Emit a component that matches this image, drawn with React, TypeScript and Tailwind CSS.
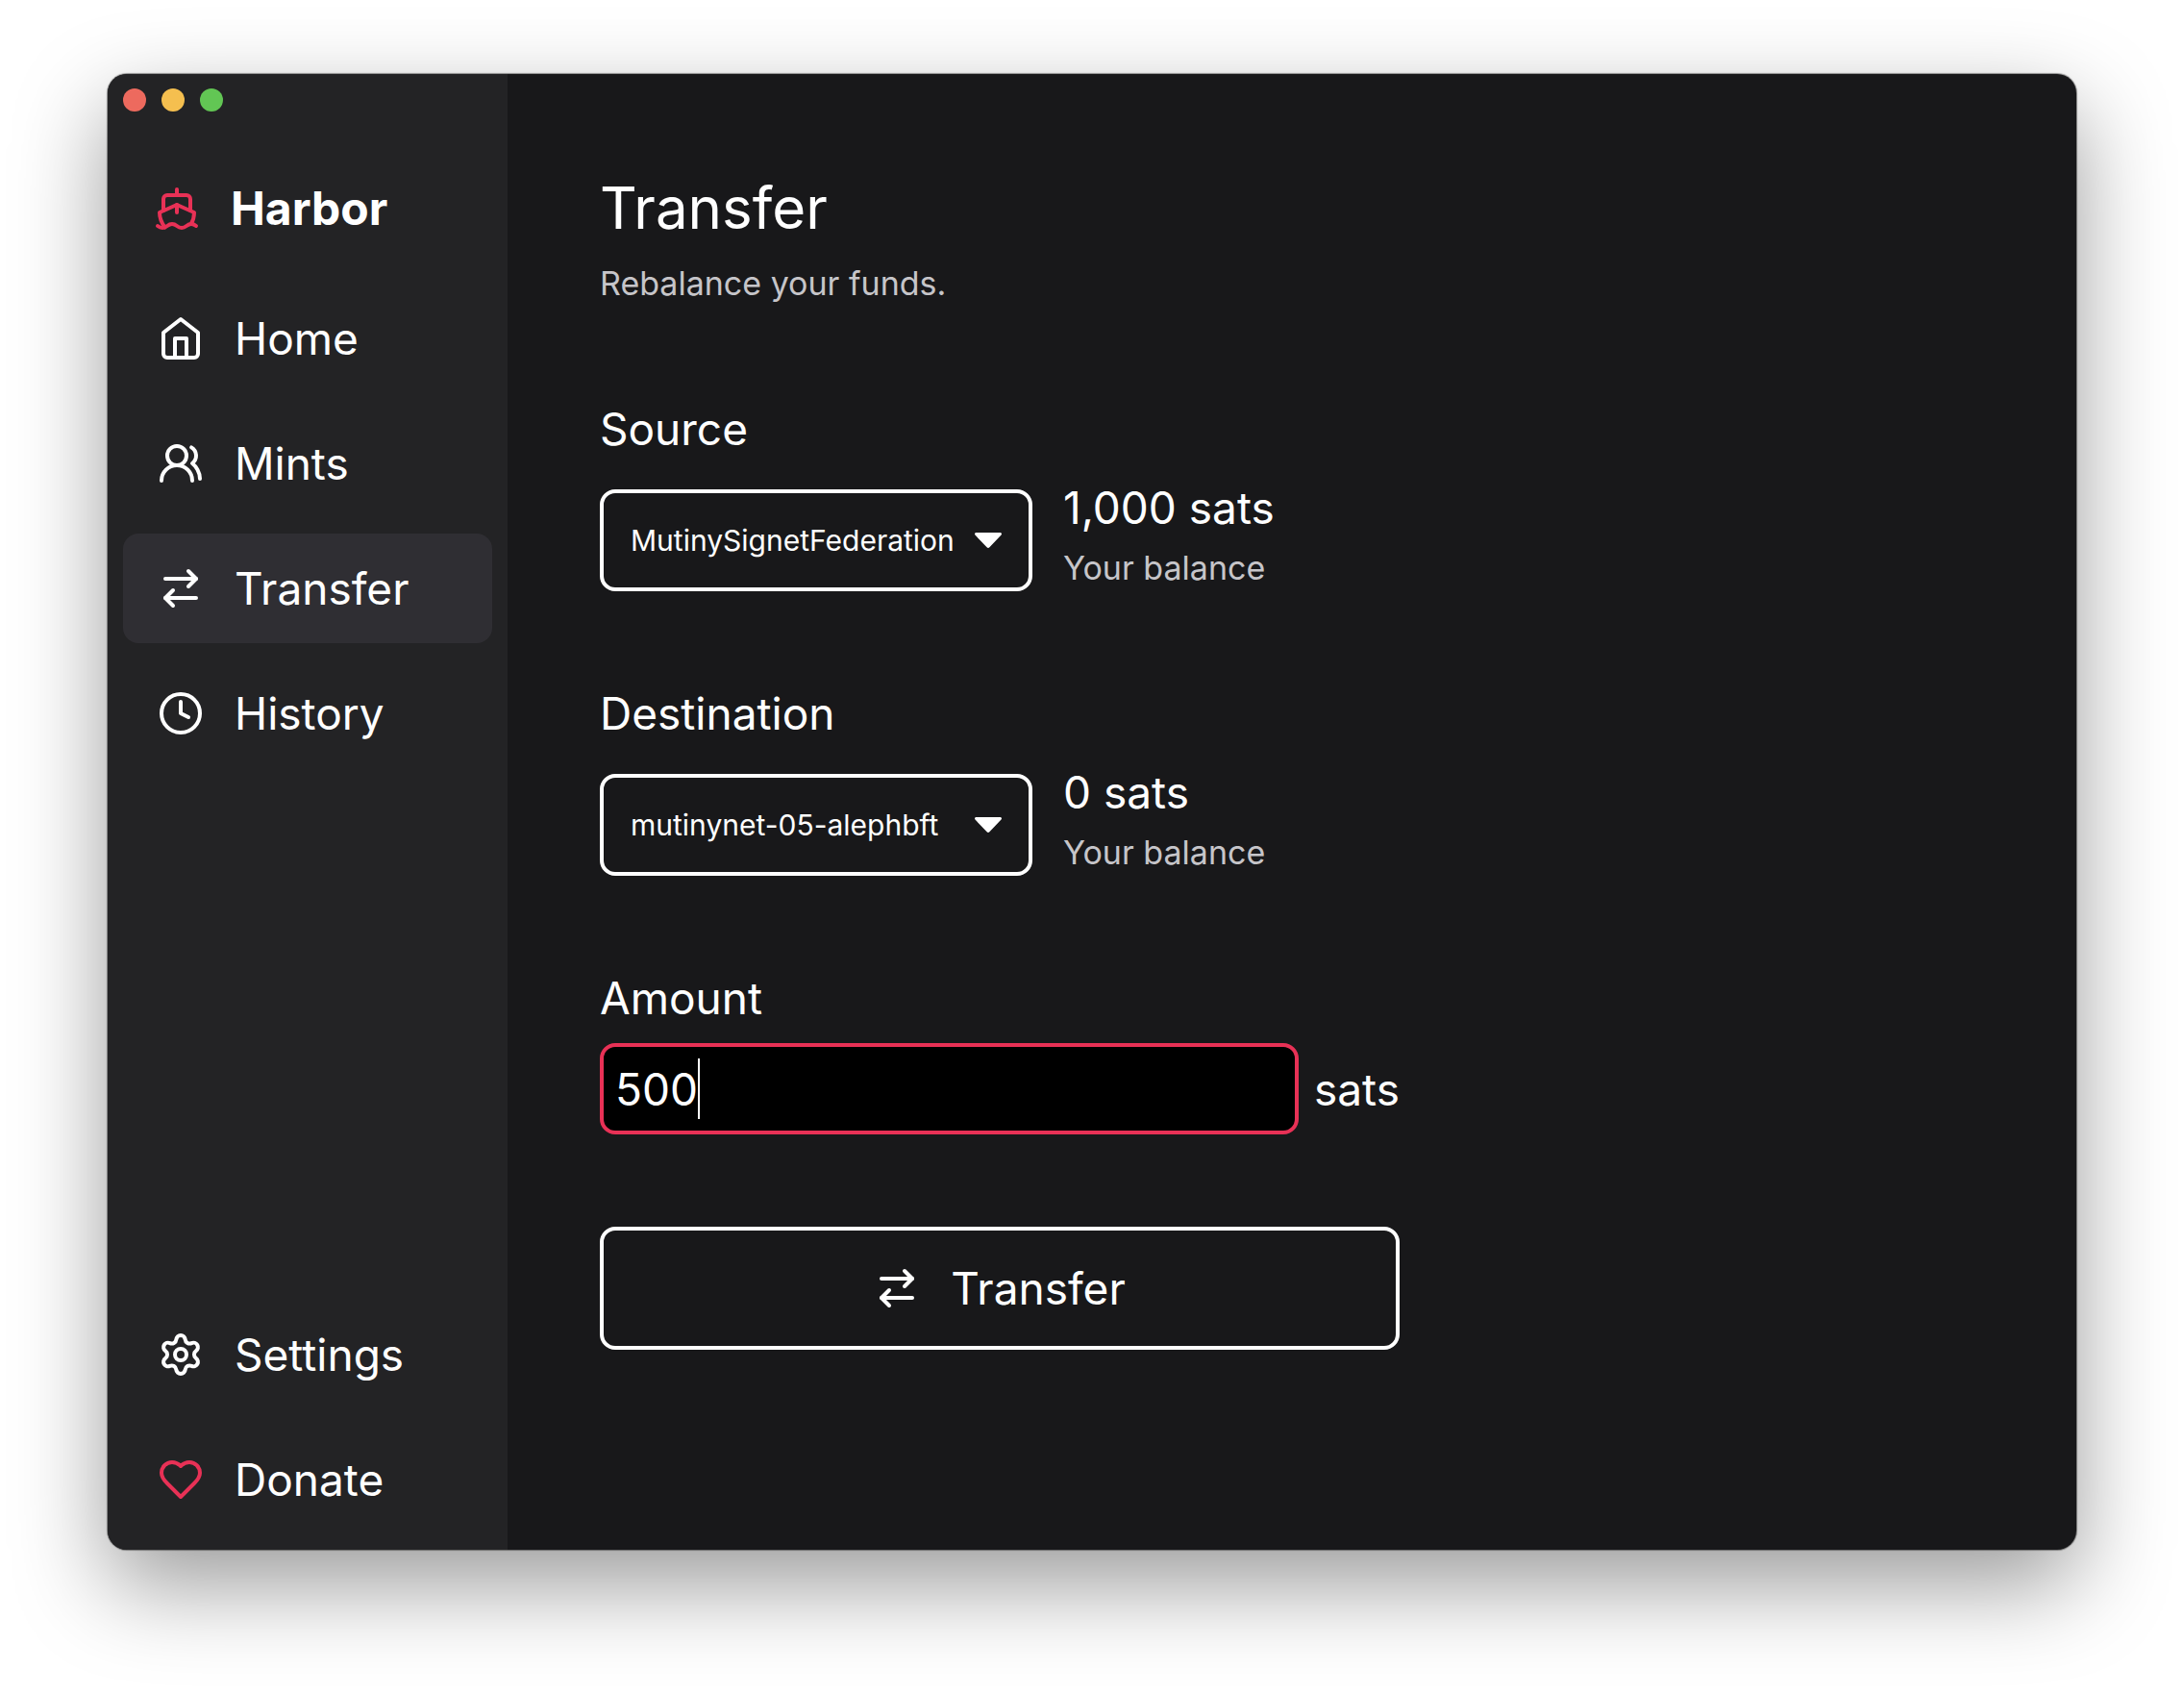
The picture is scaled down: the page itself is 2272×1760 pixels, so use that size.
import { useState } from 'react';
import type { ReactNode } from 'react';
import { ArrowRightLeft, Clock, Settings, UsersRound } from 'lucide-react';
import clsx from 'clsx';

const MINTS = [
  { name: 'MutinySignetFederation', balance: 1000 },
  { name: 'mutinynet-05-alephbft',  balance: 0 },
];

function StrokeIcon({ className, children }: { className?: string; children: ReactNode }) {
  return (
    <svg
      viewBox="0 0 24 24"
      fill="none"
      stroke="currentColor"
      strokeWidth="2"
      strokeLinecap="round"
      strokeLinejoin="round"
      aria-hidden="true"
      className={clsx('size-12 shrink-0', className)}
    >
      {children}
    </svg>
  );
}

function ShipIcon() {
  return (
    <StrokeIcon className="text-[#e83156]">
      <path d="M2 21c.6.5 1.2 1 2.5 1 2.5 0 2.5-2 5-2 1.3 0 1.9.5 2.5 1 .6.5 1.2 1 2.5 1 2.5 0 2.5-2 5-2 1.3 0 1.9.5 2.5 1" />
      <path d="M19.38 20A11.6 11.6 0 0 0 21 14l-9-4-9 4c0 2.9.94 5.34 2.81 7.76" />
      <path d="M19 13V7a2 2 0 0 0-2-2H7a2 2 0 0 0-2 2v6" />
      <path d="M12 10v4" />
      <path d="M12 2v3" />
    </StrokeIcon>
  );
}

function HomeIcon() {
  return (
    <StrokeIcon>
      <path d="m3 9 9-7 9 7v11a2 2 0 0 1-2 2H5a2 2 0 0 1-2-2z" />
      <path d="M9 22V12h6v10" />
    </StrokeIcon>
  );
}

function HeartIcon() {
  return (
    <StrokeIcon className="text-[#e83156]">
      <path d="M19 14c1.49-1.46 3-3.21 3-5.5A5.5 5.5 0 0 0 16.5 3c-1.76 0-3 .5-4.5 2-1.5-1.5-2.74-2-4.5-2A5.5 5.5 0 0 0 2 8.5c0 2.3 1.5 4.05 3 5.5l7 7Z" />
    </StrokeIcon>
  );
}

function NavItem({ icon, label, active }: { icon: ReactNode; label: string; active?: boolean }) {
  return (
    <a
      href="#"
      aria-current={active ? 'page' : undefined}
      className={clsx(
        'flex items-center gap-8 rounded-2xl px-9 py-[26px] text-[46px] leading-[62px]',
        active && 'bg-[#2f2e33]',
      )}
    >
      {icon}
      {label}
    </a>
  );
}

function MintPicker({ id, label, value, onChange }: {
  id: string;
  label: string;
  value: string;
  onChange: (name: string) => void;
}) {
  const mint = MINTS.find((m) => m.name === value);

  return (
    <div className="flex flex-col gap-5">
      <label htmlFor={id} className="text-[46px] leading-[62px]">{label}</label>
      <div className="flex items-end gap-8">
        <div className="relative w-[450px]">
          <select
            id={id}
            value={value}
            onChange={(e) => onChange(e.target.value)}
            className="block h-[106px] w-full appearance-none rounded-2xl border-4 border-white bg-transparent pr-14 pl-7 text-[30px] leading-[42px] outline-none"
          >
            {MINTS.map((m) => <option key={m.name}>{m.name}</option>)}
          </select>
          <svg
            viewBox="0 0 28 16"
            fill="currentColor"
            aria-hidden="true"
            className="pointer-events-none absolute top-[45px] right-8 h-4 w-7"
          >
            <path d="M1.6 0h24.8c1.5 0 2.1 1.6 1.1 2.6L15.4 15.3c-.8.9-2 .9-2.8 0L.5 2.6C-.5 1.6.1 0 1.6 0z" />
          </svg>
        </div>
        <div className="flex flex-col gap-2">
          <span className="text-[46px] leading-[62px]">{mint?.balance.toLocaleString('en-US')} sats</span>
          <span className="text-[34px] leading-[48px] text-[#c6c5c9]">Your balance</span>
        </div>
      </div>
    </div>
  );
}

export default function App() {
  const [source, setSource] = useState(MINTS[0].name);
  const [destination, setDestination] = useState(MINTS[1].name);
  const [amount, setAmount] = useState('500');

  return (
    <div className="flex min-h-screen bg-white px-28 pt-[77px] pb-[148px] font-[Inter,sans-serif] text-white">
      <div className="flex flex-1 overflow-hidden rounded-[20px] bg-[#18181a] shadow-[0_0_1px_1px_rgba(0,0,0,0.4),0_36px_96px_rgba(0,0,0,0.4)]">
        <aside className="flex w-[416px] shrink-0 flex-col bg-[#232325] px-4 pt-[15px] pb-4">
          <div className="flex gap-4">
            <button aria-label="Close" className="size-6 rounded-full bg-[#ed6a5e]" />
            <button aria-label="Minimize" className="size-6 rounded-full bg-[#f5bf4f]" />
            <button aria-label="Zoom" className="size-6 rounded-full bg-[#62c654]" />
          </div>

          <div className="mt-[70px] flex items-center gap-8 px-8 text-[48px] leading-[62px] font-bold">
            <ShipIcon />
            Harbor
          </div>

          <nav className="mt-[47px] flex flex-1 flex-col gap-4">
            <NavItem icon={<HomeIcon />} label="Home" />
            <NavItem icon={<UsersRound className="size-12" />} label="Mints" />
            <NavItem icon={<ArrowRightLeft className="size-12" />} label="Transfer" active />
            <NavItem icon={<Clock className="size-12" />} label="History" />
            <div className="flex-1" />
            <NavItem icon={<Settings className="size-12" />} label="Settings" />
            <NavItem icon={<HeartIcon />} label="Donate" />
          </nav>
        </aside>

        <main className="flex-1 px-24 pt-24">
          <form className="flex max-w-[832px] flex-col gap-24" onSubmit={(e) => e.preventDefault()}>
            <header className="flex flex-col gap-3">
              <h1 className="text-[60px] leading-[86px]">Transfer</h1>
              <p className="text-[34px] leading-[48px] text-[#c6c5c9]">Rebalance your funds.</p>
            </header>

            <MintPicker id="source" label="Source" value={source} onChange={setSource} />
            <MintPicker id="destination" label="Destination" value={destination} onChange={setDestination} />

            <div className="flex flex-col gap-4">
              <label htmlFor="amount" className="text-[46px] leading-[62px]">Amount</label>
              <div className="flex items-center gap-4 text-[46px] leading-[62px]">
                <div className="relative flex-1">
                  <input
                    id="amount"
                    inputMode="numeric"
                    value={amount}
                    onChange={(e) => setAmount(e.target.value)}
                    className="block h-[95px] w-full rounded-2xl border-4 border-[#e83156] bg-black px-3 caret-transparent outline-none"
                  />
                  {/* text cursor, follows the typed value */}
                  <div className="pointer-events-none absolute inset-y-4 left-4 flex" aria-hidden="true">
                    <span className="invisible">{amount}</span>
                    <span className="w-[2px] bg-white" />
                  </div>
                </div>
                sats
              </div>
            </div>

            <button
              type="submit"
              className="flex h-[128px] items-center justify-center gap-8 rounded-2xl border-4 border-white text-[46px] leading-[62px]"
            >
              <ArrowRightLeft className="size-12" />
              Transfer
            </button>
          </form>
        </main>
      </div>
    </div>
  );
}
